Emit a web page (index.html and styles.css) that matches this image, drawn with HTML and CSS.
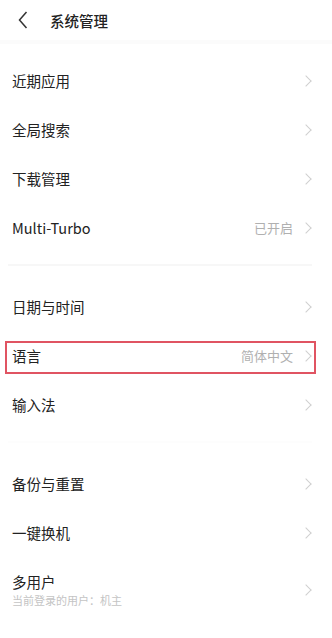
FILE: index.html
```html
<!DOCTYPE html>
<html lang="zh-CN">

<head>
    <meta charset="UTF-8" />
    <title>系统管理</title>
    <link rel="stylesheet" href="styles.css">
</head>

<body>
    <div class="header">
        <svg class="back" width="10" height="18" viewBox="0 0 10 18">
            <path d="M8.5 1 L1.5 9 L8.5 17" fill="none" stroke="#333" stroke-width="1.5" />
        </svg>
        <span class="title">系统管理</span>
    </div>

    <div class="group">
        <div class="row"><span class="label">近期应用</span><span class="chev"></span></div>
        <div class="row"><span class="label">全局搜索</span><span class="chev"></span></div>
        <div class="row"><span class="label">下载管理</span><span class="chev"></span></div>
        <div class="row"><span class="label">Multi-Turbo</span><span class="value">已开启</span><span class="chev"></span></div>
    </div>

    <div class="divider"></div>

    <div class="group">
        <div class="row"><span class="label">日期与时间</span><span class="chev"></span></div>
        <div class="row highlight"><span class="label">语言</span><span class="value">简体中文</span><span class="chev"></span></div>
        <div class="row"><span class="label">输入法</span><span class="chev"></span></div>
    </div>

    <div class="divider faint"></div>

    <div class="group">
        <div class="row"><span class="label">备份与重置</span><span class="chev"></span></div>
        <div class="row"><span class="label">一键换机</span><span class="chev"></span></div>
        <div class="row tall">
            <div class="text">
                <span class="label">多用户</span>
                <span class="sub">当前登录的用户：机主</span>
            </div>
            <span class="chev"></span>
        </div>
    </div>
</body>

</html>
```

FILE: styles.css
```css
body {
    margin: 0;
    background: #fff;
    font-family: "Noto Sans CJK SC", "Noto Sans", sans-serif;
    color: #222;
}

/* Barra de título */
.header {
    height: 40px;
    display: flex;
    align-items: center;
    padding-left: 18px;
    border-bottom: 4px solid #fbfbfb;
}

.back {
    margin-right: 22px;
}

.title {
    font-size: 14.5px;
    font-weight: 500;
}

.group {
    display: flex;
    flex-direction: column;
}

.header + .group {
    margin-top: 12px;
}

/* Linhas da lista */
.row {
    position: relative;
    height: 49px;
    display: flex;
    align-items: center;
    padding: 0 22px 0 12px;
}

.row.tall {
    height: 66px;
}

.label {
    flex: 1;
    font-size: 14.5px;
    line-height: 18px;
}

.text {
    flex: 1;
    display: flex;
    flex-direction: column;
}

.sub {
    font-size: 11px;
    color: #c4c4c4;
    line-height: 16px;
    margin-top: 1px;
}

.value {
    font-size: 13px;
    color: #b0b0b0;
    margin-right: 9px;
}

.chev {
    width: 7px;
    height: 7px;
    border-top: 1.3px solid #cfcfcf;
    border-right: 1.3px solid #cfcfcf;
    transform: rotate(45deg);
}

.divider {
    height: 2px;
    background: #f7f7f7;
    margin: 12px 20px 16px 8px;
}

.divider.faint {
    background: #fdfdfd;
}

/* Destaque vermelho */
.highlight::after {
    content: "";
    position: absolute;
    left: 5px;
    right: 16px;
    top: 10px;
    bottom: 6px;
    border: 2px solid #e05462;
}
```
